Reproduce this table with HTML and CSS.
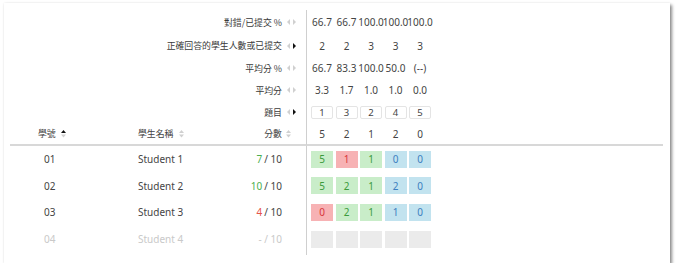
FILE: index.html
```html
<!DOCTYPE html>
<html lang="zh-Hant">
<head>
<meta charset="utf-8">
<title>作答統計</title>
<link rel="stylesheet" href="styles.css">
</head>
<body>
<div class="card">
  <div class="grid">
    <!-- summary rows -->
    <div class="label">對錯/已提交 %</div>
    <div class="ic"><svg class="lr" viewBox="0 0 10 6"><path class="off" d="M0 3 3 0 3 6Z"/><path class="off" d="M9 3 6 0 6 6Z"/></svg></div>
    <div class="vals"><span>66.7</span><span>66.7</span><span>100.0</span><span>100.0</span><span>100.0</span></div>

    <div class="label">正確回答的學生人數或已提交</div>
    <div class="ic"><svg class="lr" viewBox="0 0 10 6"><path class="off" d="M0 3 3 0 3 6Z"/><path class="on" d="M9 3 6 0 6 6Z"/></svg></div>
    <div class="vals"><span>2</span><span>2</span><span>3</span><span>3</span><span>3</span></div>

    <div class="label">平均分 %</div>
    <div class="ic"><svg class="lr" viewBox="0 0 10 6"><path class="off" d="M0 3 3 0 3 6Z"/><path class="off" d="M9 3 6 0 6 6Z"/></svg></div>
    <div class="vals"><span>66.7</span><span>83.3</span><span>100.0</span><span>50.0</span><span>(--)</span></div>

    <div class="label">平均分</div>
    <div class="ic"><svg class="lr" viewBox="0 0 10 6"><path class="off" d="M0 3 3 0 3 6Z"/><path class="off" d="M9 3 6 0 6 6Z"/></svg></div>
    <div class="vals"><span>3.3</span><span>1.7</span><span>1.0</span><span>1.0</span><span>0.0</span></div>

    <div class="label">題目</div>
    <div class="ic"><svg class="lr" viewBox="0 0 10 6"><path class="off" d="M0 3 3 0 3 6Z"/><path class="on" d="M9 3 6 0 6 6Z"/></svg></div>
    <div class="vals qnums"><span>1</span><span>3</span><span>2</span><span>4</span><span>5</span></div>

    <!-- header row -->
    <div class="th th-id">學號<svg class="sort" viewBox="0 0 5 9"><path class="on" d="M0 4 2.5 1 5 4Z"/><path class="off" d="M0 5.5 2.5 8.5 5 5.5Z"/></svg></div>
    <div class="th th-name">學生名稱<svg class="sort" viewBox="0 0 5 9"><path class="off" d="M0 4 2.5 1 5 4Z"/><path class="off" d="M0 5.5 2.5 8.5 5 5.5Z"/></svg></div>
    <div class="th th-score">分數</div>
    <div class="th th-ic"><svg class="sort" viewBox="0 0 5 9"><path class="off" d="M0 4 2.5 1 5 4Z"/><path class="off" d="M0 5.5 2.5 8.5 5 5.5Z"/></svg></div>
    <div class="th vals"><span>5</span><span>2</span><span>1</span><span>2</span><span>0</span></div>

    <!-- students -->
    <div class="td td-id">01</div>
    <div class="td td-name">Student 1</div>
    <div class="td td-score"><b class="good">7</b> / 10</div>
    <div class="td"></div>
    <div class="td vals marks"><span class="ok">5</span><span class="bad">1</span><span class="ok">1</span><span class="zero">0</span><span class="zero">0</span></div>

    <div class="td td-id">02</div>
    <div class="td td-name">Student 2</div>
    <div class="td td-score"><b class="good">10</b> / 10</div>
    <div class="td"></div>
    <div class="td vals marks"><span class="ok">5</span><span class="ok">2</span><span class="ok">1</span><span class="zero">2</span><span class="zero">0</span></div>

    <div class="td td-id">03</div>
    <div class="td td-name">Student 3</div>
    <div class="td td-score"><b class="low">4</b> / 10</div>
    <div class="td"></div>
    <div class="td vals marks"><span class="bad">0</span><span class="ok">2</span><span class="ok">1</span><span class="zero">1</span><span class="zero">0</span></div>

    <div class="td td-id dim last">04</div>
    <div class="td td-name dim last">Student 4</div>
    <div class="td td-score dim last">- / 10</div>
    <div class="td last"></div>
    <div class="td vals marks last"><span class="empty"></span><span class="empty"></span><span class="empty"></span><span class="empty"></span><span class="empty"></span></div>
  </div>
</div>
</body>
</html>
```

FILE: styles.css
```css
* { box-sizing: border-box; }

html, body {
  margin: 0;
  padding: 0;
  background: #ffffff;
}

body {
  padding: 3px 0 0 4px;
  font-family: "Noto Sans", "Noto Sans CJK TC", sans-serif;
  font-size: 10px;
  color: #444444;
}

.card {
  width: 666px;
  height: 260px;
  background: #ffffff;
  box-shadow: 2px 2px 3px rgba(0, 0, 0, 0.45), 0 0 2px rgba(0, 0, 0, 0.08);
  padding: 7px 7px 0 6px;
}

/* one grid for summary rows, the header and the student rows */
.grid {
  display: grid;
  grid-template-columns: 120px 110px 42px 24px 1fr;
  grid-template-rows: 24px 23px 22px 22px 22px 23px 26.5px 26.5px 26.5px 29px;
  align-items: stretch;
}

.grid > div {
  display: flex;
  align-items: center;
  white-space: nowrap;
}

.label {
  grid-column: 1 / 4;
  justify-content: flex-end;
  font-family: "Noto Sans CJK TC", sans-serif;
  font-size: 8.9px;
  color: #3a3a3a;
}

.ic { padding-left: 5px; }

.lr { width: 10px; height: 6px; display: block; }
.sort { width: 5px; height: 9px; display: block; }

.off { fill: #d0d0d0; }
.on { fill: #111111; }

.vals {
  border-left: 1px solid #cfcfcf;
  padding-left: 4px;
  gap: 2.5px;
}

.vals span {
  width: 22px;
  flex: none;
  display: flex;
  justify-content: center;
  align-items: center;
}

.qnums span {
  height: 13px;
  border: 1px solid #e4e4e4;
  border-radius: 2px;
  font-size: 9.5px;
}

.th { border-bottom: 2px solid #d8d8d8; }

.th-id, .th-name, .th-score {
  font-family: "Noto Sans CJK TC", sans-serif;
  font-size: 8.9px;
  gap: 5px;
}

.th-id { padding-left: 28px; }
.th-name { padding-left: 8px; }
.th-score { justify-content: flex-end; }
.th-ic { padding-left: 4px; }

.td-id { padding-left: 34px; }
.td-name { padding-left: 8px; }
.td-score { justify-content: flex-end; }

.td-score b { font-weight: normal; margin-right: 2px; }
.good { color: #4caf50; }
.low { color: #e5534b; }

.dim { color: #c9c9c9; }

.marks span { height: 17px; }
.ok { background: #c9edc9; color: #3c9a3c; }
.bad { background: #f7b2b4; color: #d8363c; }
.zero { background: #c2e3ef; color: #3d7fc0; }
.empty { background: #ebebeb; }

.last { padding-bottom: 2px; }
```
